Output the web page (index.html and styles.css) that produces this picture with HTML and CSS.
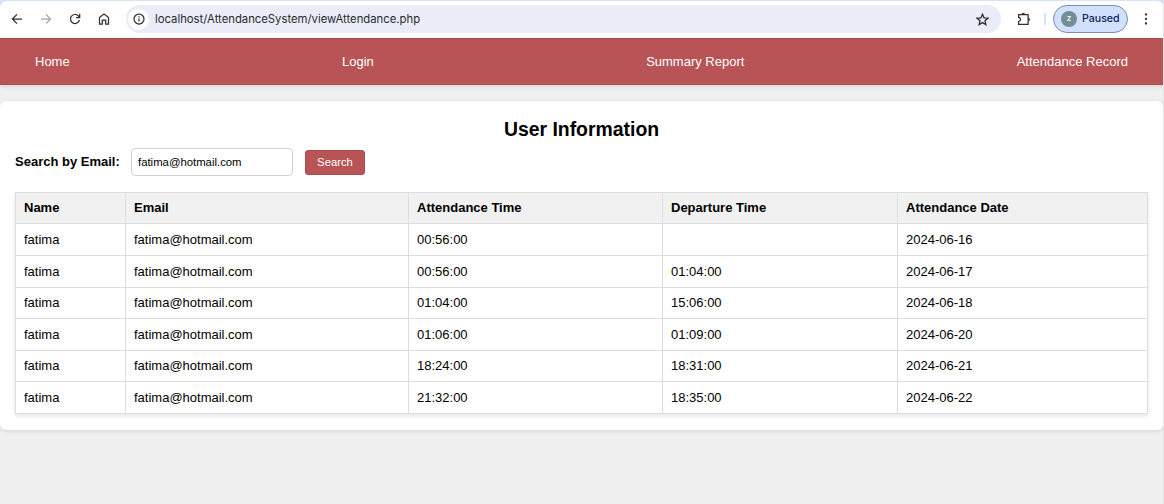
FILE: index.html
```html
<!DOCTYPE html>
<html lang="en">
<head>
<meta charset="utf-8">
<title>User Information</title>
<link rel="stylesheet" href="styles.css">
</head>
<body>
<div class="browser">
  <div class="toolbar">
    <svg class="icon back" viewBox="0 0 12 12"><path d="M11 6H1.5M6 1.4 1.4 6 6 10.6"/></svg>
    <svg class="icon forward" viewBox="0 0 12 12"><path d="M1 6h9.5M6 1.4 10.6 6 6 10.6"/></svg>
    <svg class="icon reload" viewBox="0 0 12 12"><path d="M10.4 7A4.5 4.5 0 1 1 9.2 2.8L10.5 4.2M10.7 .8v3.7H7"/></svg>
    <svg class="icon home" viewBox="0 0 12 12"><path d="M1.5 11.2V4.6L6 1l4.5 3.6v6.6H7.7V7.1H4.3v4.1Z"/></svg>
    <div class="address">
      <span class="site"><svg class="info" viewBox="0 0 12 12"><circle cx="6" cy="6" r="5"/><path d="M6 5.4v3.2M6 3.2v1.3"/></svg></span>
      <span class="url">localhost/AttendanceSystem/viewAttendance.php</span>
      <svg class="star" viewBox="0 0 12 12"><path d="m6 1.2 1.4 3.3 3.6.3-2.7 2.4.8 3.5L6 8.9l-3.1 1.8.8-3.5L1 4.8l3.6-.3Z"/></svg>
    </div>
    <svg class="extension" viewBox="0 0 14 14"><path d="M1.6 2.7h9.5v9.6H1.6V9.5c2.6-.3 2.6-3.8 0-4.1Z"/><path class="tab" d="M4.6 2.5a1.7 1.7 0 0 1 3.4 0ZM11.3 5.8a1.7 1.7 0 0 1 0 3.4Z"/></svg>
    <span class="divider"></span>
    <div class="profile"><span class="avatar">z</span><span>Paused</span></div>
    <svg class="more" viewBox="0 0 4 12"><circle cx="2" cy="1.5" r="1.15"/><circle cx="2" cy="6" r="1.15"/><circle cx="2" cy="10.5" r="1.15"/></svg>
  </div>
</div>
<nav class="nav">
  <a>Home</a><a>Login</a><a>Summary Report</a><a>Attendance Record</a>
</nav>
<main class="card">
  <h1 class="title">User Information</h1>
  <form class="search">
    <label class="label" for="email">Search by Email:</label>
    <input class="input" id="email" type="text" value="fatima@hotmail.com">
    <button class="button" type="button">Search</button>
  </form>
  <table class="table">
    <colgroup><col class="c-name"><col class="c-email"><col class="c-in"><col class="c-out"><col class="c-date"></colgroup>
    <thead>
      <tr><th>Name</th><th>Email</th><th>Attendance Time</th><th>Departure Time</th><th>Attendance Date</th></tr>
    </thead>
    <tbody>
      <tr class="tall"><td>fatima</td><td>fatima@hotmail.com</td><td>00:56:00</td><td></td><td>2024-06-16</td></tr>
      <tr class="tall"><td>fatima</td><td>fatima@hotmail.com</td><td>00:56:00</td><td>01:04:00</td><td>2024-06-17</td></tr>
      <tr><td>fatima</td><td>fatima@hotmail.com</td><td>01:04:00</td><td>15:06:00</td><td>2024-06-18</td></tr>
      <tr class="tall"><td>fatima</td><td>fatima@hotmail.com</td><td>01:06:00</td><td>01:09:00</td><td>2024-06-20</td></tr>
      <tr><td>fatima</td><td>fatima@hotmail.com</td><td>18:24:00</td><td>18:31:00</td><td>2024-06-21</td></tr>
      <tr class="tall"><td>fatima</td><td>fatima@hotmail.com</td><td>21:32:00</td><td>18:35:00</td><td>2024-06-22</td></tr>
    </tbody>
  </table>
</main>
</body>
</html>
```

FILE: styles.css
```css
* { box-sizing: border-box; }
html { height: 100%; overflow: hidden; }
body {
  margin: 0;
  height: 100%;
  background: #f0f0f0;
  border-right: 1px solid #e4e4e4;
  font: 13px/15px "Liberation Sans", Arial, sans-serif;
  color: #000;
}
svg { fill: none; stroke: #303134; stroke-width: 1.25; flex: none; display: block; }
.browser { background: #d7e3fb; padding-top: 1px; height: 38px; margin-right: -1px; }
.toolbar {
  display: flex;
  align-items: center;
  height: 37px;
  padding: 0 0 1px 11px;
  background: #fff;
  border-radius: 7px 7px 0 0;
}
.icon { width: 12px; height: 12px; margin-right: 17px; }
.forward { stroke: #a5a7aa; }
.home { margin-right: 16px; }
.address {
  display: flex;
  align-items: center;
  width: 875px;
  height: 28px;
  padding: 0 12px 0 2px;
  border-radius: 14px;
  background: #eaedf8;
}
.site { display: grid; place-items: center; width: 21px; height: 21px; border-radius: 50%; background: #fff; }
.info { width: 12px; height: 12px; }
.url { margin-left: 6px; flex: 1; font: 11.3px/15px Inter, sans-serif; color: #27292d; }
.star { width: 13px; height: 13px; }
.extension { width: 14px; height: 14px; margin-left: 16px; }
.tab { fill: #303134; stroke: none; }
.divider { width: 2px; height: 12px; margin-left: 13px; background: #d3e2fc; }
.profile {
  display: flex;
  align-items: center;
  gap: 5px;
  width: 75px;
  height: 28px;
  margin-left: 7px;
  padding-left: 7px;
  border: 1px solid #7c8da9;
  border-radius: 14px;
  background: #d1e1fd;
  font: 500 10.6px/14px Inter, sans-serif;
  color: #0c2258;
}
.avatar {
  width: 16px;
  height: 16px;
  border-radius: 50%;
  background: #728e98;
  color: #fff;
  font-size: 8px;
  line-height: 15px;
  text-align: center;
}
.more { width: 4px; height: 12px; margin-left: 16px; fill: #303134; stroke: none; }
.nav {
  display: flex;
  justify-content: space-between;
  align-items: center;
  height: 47px;
  margin-right: -1px;
  padding: 0 36px 0 35px;
  background: #b85456;
  border-top: 1px solid #a94c50;
  border-bottom: 1px solid #a94c50;
  box-shadow: 0 2px 4px rgba(0, 0, 0, .1);
  color: #fff;
}
.card {
  margin-top: 16px;
  height: 329px;
  padding: 18px 15px 0 15px;
  background: #fff;
  border-radius: 6px;
  box-shadow: 0 1px 4px rgba(0, 0, 0, .12);
}
.title { margin: 0; font-size: 19.4px; line-height: 20px; text-align: center; }
.search { display: flex; align-items: center; height: 28px; margin: 9px 0 16px; }
.label { font-weight: bold; width: 116px; padding-bottom: 1px; }
.input {
  width: 162px;
  height: 28px;
  padding: 0 6px;
  border: 1px solid #d2d2d2;
  border-radius: 4px;
  background: #fff;
  color: #000;
  font: 11.35px "Liberation Sans", Arial, sans-serif;
}
.button {
  width: 60px;
  height: 25px;
  margin-left: 12px;
  padding: 0;
  border: 1px solid #ac4a4e;
  border-radius: 3px;
  background: #b85456;
  color: #fff;
  font: 11.3px "Liberation Sans", Arial, sans-serif;
}
.table {
  width: 1133px;
  table-layout: fixed;
  border-collapse: collapse;
  box-shadow: 0 2px 4px rgba(0, 0, 0, .1);
}
.table tr { height: 31px; }
.table .tall { height: 32px; }
.table th, .table td { padding: 0 8px 1px; border: 1px solid #ddd; text-align: left; }
.table th { background: #f1f1f1; }
.c-name { width: 110px; }
.c-email { width: 283px; }
.c-in { width: 254px; }
.c-out { width: 235px; }
```
